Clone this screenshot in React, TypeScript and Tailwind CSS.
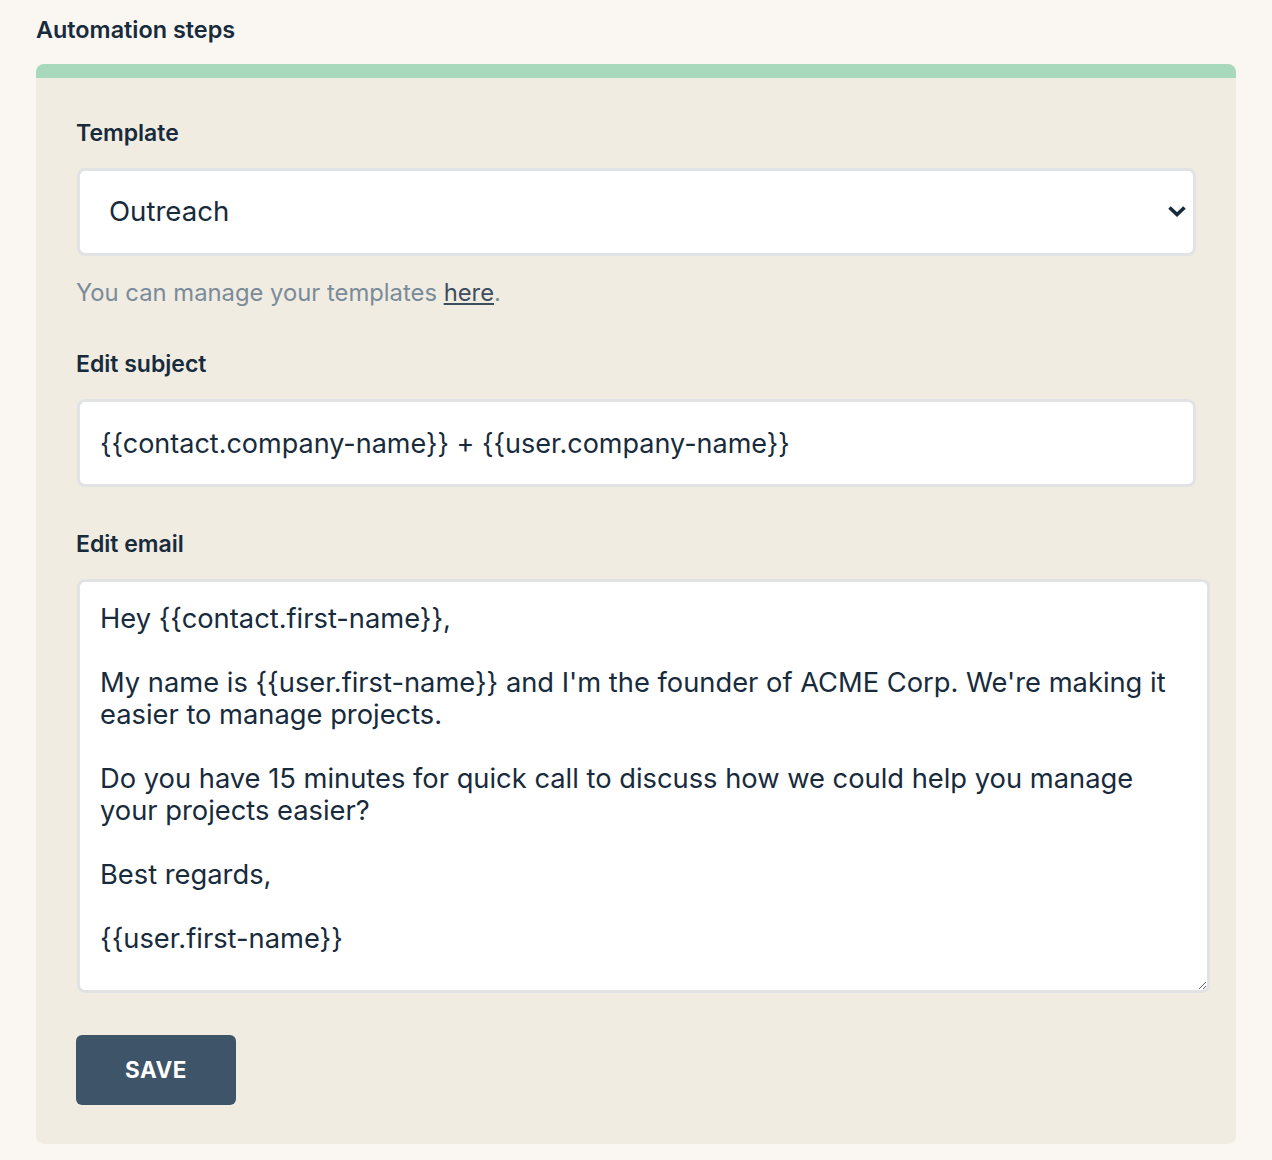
import React, { useState } from "react";

const emailBody = `Hey {{contact.first-name}},

My name is {{user.first-name}} and I'm the founder of ACME Corp. We're making it easier to manage projects.

Do you have 15 minutes for quick call to discuss how we could help you manage your projects easier?

Best regards,

{{user.first-name}}`;

const App = () => {
  const [template, setTemplate] = useState("outreach");
  const [subject, setSubject] = useState("{{contact.company-name}} + {{user.company-name}}");
  const [body, setBody] = useState(emailBody);

  return (
    <div className="min-h-[1160px] bg-[#faf7f2] px-9 pt-4 pb-4 text-[#172b3c] font-['Inter',sans-serif]">
      <h2 className="text-[23.4px] font-semibold leading-[28px]">Automation steps</h2>

      <div className="mt-5 rounded-lg bg-[#f1ece2] border-t-[14px] border-[#a8d9bc] px-10 pt-[41px] pb-[39px]">
        <label className="block text-[23px] font-semibold leading-[28px]">Template</label>
        <div className="relative mt-[21px] w-[1119px] ml-px">
          <select
            value={template}
            onChange={(e) => setTemplate(e.target.value)}
            className="w-full h-[88px] appearance-none rounded-lg border-[3px] border-[#e1e2e3] bg-white pl-[29px] text-[27.6px] text-[#172b3c] outline-none"
          >
            <option value="outreach">Outreach</option>
            <option value="followup">Follow up</option>
          </select>
          <svg
            className="pointer-events-none absolute right-[9px] top-[36px]"
            width="20"
            height="14"
            viewBox="0 0 20 14"
            fill="none"
          >
            <path d="M2.5 3.5 L10 10.5 L17.5 3.5" stroke="#172b3c" strokeWidth="3.6" />
          </svg>
        </div>
        <p className="mt-[22px] text-[23.8px] leading-[30px] text-[#7a8b99]">
          You can manage your templates{" "}
          <a href="#" className="underline text-[#3d4f5f]">
            here
          </a>
          .
        </p>

        <label className="mt-[42px] block text-[23px] font-semibold leading-[28px]">Edit subject</label>
        <input
          value={subject}
          onChange={(e) => setSubject(e.target.value)}
          className="mt-[21px] block w-[1119px] h-[88px] ml-px rounded-lg border-[3px] border-[#e1e2e3] bg-white px-[20px] text-[27px] text-[#172b3c] outline-none"
        />

        <label className="mt-[43px] block text-[23px] font-semibold leading-[28px]">Edit email</label>
        <textarea
          value={body}
          onChange={(e) => setBody(e.target.value)}
          className="mt-[21px] block w-[1133px] h-[414px] ml-px rounded-lg border-[3px] border-[#e1e2e3] bg-white px-[20px] pt-[21px] text-[27.3px] leading-[32px] text-[#172b3c] outline-none"
        />

        <button className="mt-[42px] h-[70px] w-[160px] rounded-md bg-[#3e5468] text-[22.5px] font-bold text-white tracking-wide">
          SAVE
        </button>
      </div>
    </div>
  );
};

export default App;
